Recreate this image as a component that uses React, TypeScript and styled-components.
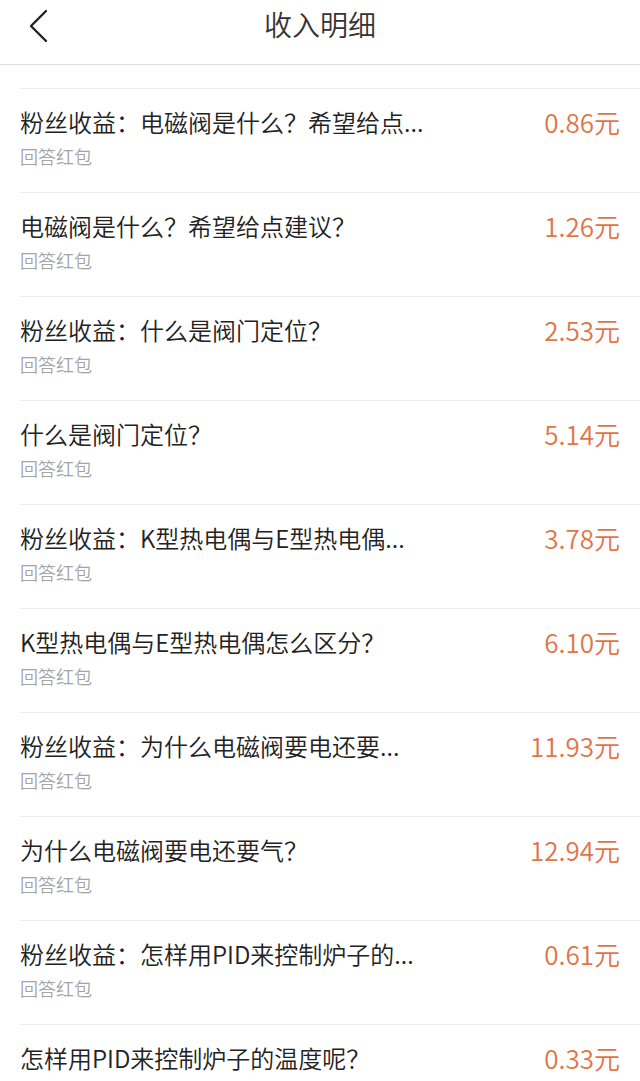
import React from "react";
import styled, { createGlobalStyle } from "styled-components";

const Global = createGlobalStyle`
  html, body { margin: 0; padding: 0; background: #fff; }
  body { font-family: "Noto Sans CJK SC", "Noto Sans", sans-serif; }
  * { box-sizing: border-box; }
`;

const Page = styled.div`
  width: 640px;
  height: 1081px;
  overflow: hidden;
  background: #fff;
`;

const Header = styled.header`
  position: relative;
  height: 65px;
  border-bottom: 1px solid #dcdcdc;
  display: flex;
  align-items: center;
  justify-content: center;
`;

const BackButton = styled.button`
  position: absolute;
  left: 22px;
  top: 4px;
  width: 36px;
  height: 44px;
  padding: 0;
  border: 0;
  background: none;
  display: flex;
  align-items: center;
  justify-content: center;
`;

const Title = styled.h1`
  margin: 0 0 16px;
  font-size: 28px;
  font-weight: 350;
  color: #333;
  line-height: 36px;
`;

const List = styled.ul`
  list-style: none;
  margin: 23px 0 0 20px;
  padding: 0;
`;

const Row = styled.li`
  border-top: 1px solid #ececec;
  height: 104px;
  padding: 17px 20px 0 0;
  display: flex;
  flex-direction: column;
  gap: 6px;
`;

const TopLine = styled.div`
  display: flex;
  align-items: center;
  justify-content: space-between;
  height: 32px;
`;

const ItemTitle = styled.span`
  font-size: 24px;
  font-weight: 350;
  line-height: 32px;
  color: #222;
  white-space: nowrap;
`;

const Amount = styled.span`
  font-size: 26px;
  font-weight: 350;
  line-height: 32px;
  color: #e07548;
  white-space: nowrap;
`;

const Sub = styled.span`
  font-size: 18px;
  font-weight: 350;
  line-height: 24px;
  color: #a4a4a4;
`;

const items: { t: string; a: string }[] = [
  { t: "粉丝收益：电磁阀是什么？希望给点...", a: "0.86元" },
  { t: "电磁阀是什么？希望给点建议？", a: "1.26元" },
  { t: "粉丝收益：什么是阀门定位？", a: "2.53元" },
  { t: "什么是阀门定位？", a: "5.14元" },
  { t: "粉丝收益：K型热电偶与E型热电偶...", a: "3.78元" },
  { t: "K型热电偶与E型热电偶怎么区分？", a: "6.10元" },
  { t: "粉丝收益：为什么电磁阀要电还要...", a: "11.93元" },
  { t: "为什么电磁阀要电还要气？", a: "12.94元" },
  { t: "粉丝收益：怎样用PID来控制炉子的...", a: "0.61元" },
  { t: "怎样用PID来控制炉子的温度呢？", a: "0.33元" },
];

export default function App() {
  return (
    <Page>
      <Global />
      <Header>
        <BackButton aria-label="返回">
          <svg width="24" height="36" viewBox="0 0 24 36">
            <path d="M18 3 L3 18 L18 33" fill="none" stroke="#222" strokeWidth="2.4" strokeLinecap="round" strokeLinejoin="round" />
          </svg>
        </BackButton>
        <Title>收入明细</Title>
      </Header>
      <List>
        {items.map((it, i) => (
          <Row key={i}>
            <TopLine>
              <ItemTitle>{it.t}</ItemTitle>
              <Amount>{it.a}</Amount>
            </TopLine>
            <Sub>回答红包</Sub>
          </Row>
        ))}
      </List>
    </Page>
  );
}
